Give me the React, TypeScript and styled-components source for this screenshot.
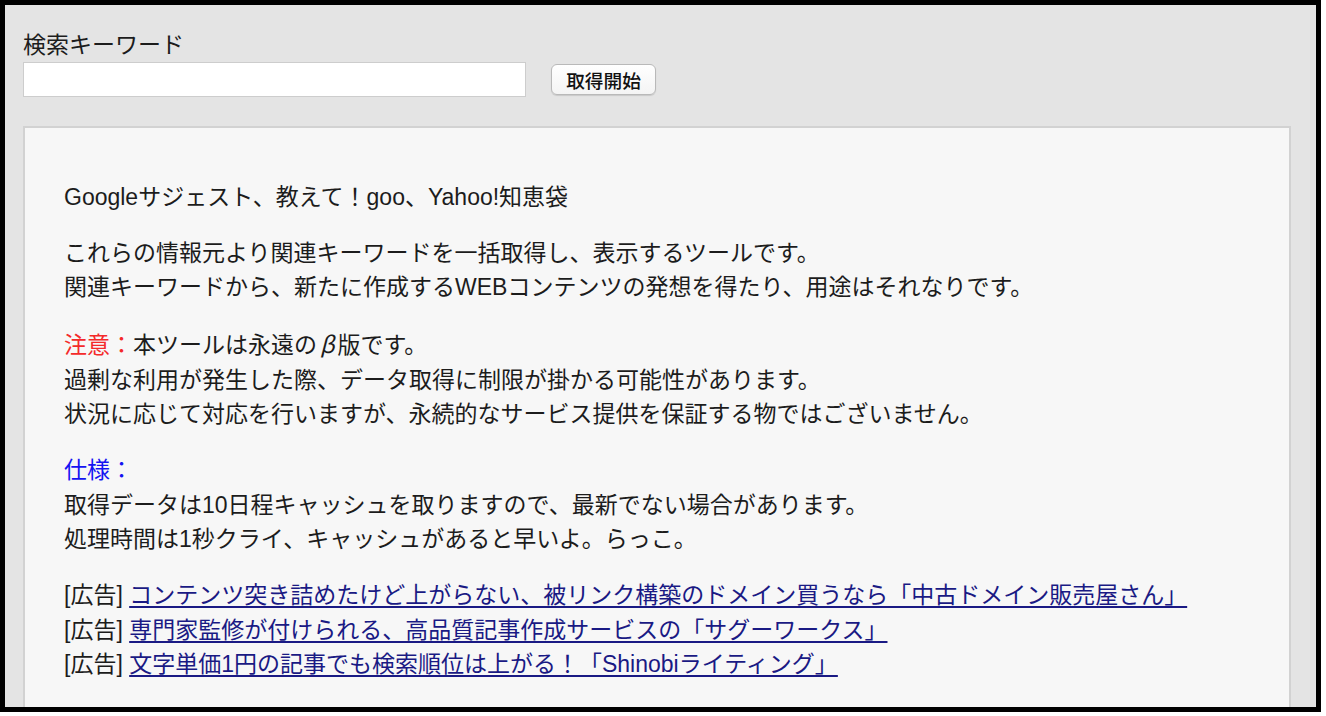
import React from "react";
import styled, { createGlobalStyle } from "styled-components";

const Global = createGlobalStyle`
  html, body { margin: 0; padding: 0; background: #ffffff; }
  body {
    font-family: "Liberation Sans", "Noto Sans CJK JP", sans-serif;
    color: #1c1c1c;
  }
`;

const Frame = styled.div`
  box-sizing: border-box;
  width: 1321px;
  height: 712px;
  border: 5px solid #000;
  background: #e4e4e4;
  padding: 23px 25px 0 18px;
  overflow: hidden;
`;

const Label = styled.div`
  font-size: 23px;
  line-height: 34px;
`;

const SearchRow = styled.form`
  display: flex;
  align-items: center;
  gap: 25px;
`;

const KeywordInput = styled.input`
  box-sizing: border-box;
  width: 503px;
  height: 35px;
  border: 1px solid #cdcdcd;
  background: #fff;
  margin: 0;
  padding: 0 6px;
  font-size: 20px;
  font-family: inherit;
`;

const StartButton = styled.button`
  box-sizing: border-box;
  width: 105px;
  height: 31px;
  border: 1px solid #b9b9b9;
  border-radius: 6px;
  background: linear-gradient(#ffffff, #f4f4f4);
  box-shadow: 0 1px 1px rgba(0, 0, 0, 0.12);
  font-family: "Liberation Sans", "Noto Sans CJK JP", sans-serif;
  font-size: 18.7px;
  font-weight: 500;
  color: #111;
  padding: 0;
  margin: 0;
`;

const Panel = styled.section`
  margin-top: 29px;
  border: 2px solid #d2d2d2;
  background: #f7f7f7;
  padding: 30px 39px;
`;

const Para = styled.p`
  margin: 21.5px 0;
  font-size: 23px;
  line-height: 34.5px;
`;

const Tag = styled.span<{ $tone: "red" | "blue" }>`
  color: ${(p) => (p.$tone === "red" ? "#f42a2a" : "#1414f2")};
`;

const Greek = styled.span`
  font-family: "Noto Sans CJK JP", sans-serif;
  font-style: italic;
  padding: 0 3px;
`;

const AdLink = styled.a`
  color: #1a1a84;
  text-decoration: underline;
  text-underline-offset: 3px;
`;

const ads = [
  "コンテンツ突き詰めたけど上がらない、被リンク構築のドメイン買うなら「中古ドメイン販売屋さん」",
  "専門家監修が付けられる、高品質記事作成サービスの「サグーワークス」",
  "文字単価1円の記事でも検索順位は上がる！「Shinobiライティング」",
];

export default function App() {
  return (
    <>
      <Global />
      <Frame>
        <Label>検索キーワード</Label>
        <SearchRow onSubmit={(e) => e.preventDefault()}>
          <KeywordInput type="text" />
          <StartButton type="submit">取得開始</StartButton>
        </SearchRow>
        <Panel>
          <Para>Googleサジェスト、教えて！goo、Yahoo!知恵袋</Para>
          <Para>
            これらの情報元より関連キーワードを一括取得し、表示するツールです。
            <br />
            関連キーワードから、新たに作成するWEBコンテンツの発想を得たり、用途はそれなりです。
          </Para>
          <Para>
            <Tag $tone="red">注意：</Tag>本ツールは永遠の<Greek>β</Greek>版です。
            <br />
            過剰な利用が発生した際、データ取得に制限が掛かる可能性があります。
            <br />
            状況に応じて対応を行いますが、永続的なサービス提供を保証する物ではございません。
          </Para>
          <Para>
            <Tag $tone="blue">仕様：</Tag>
            <br />
            取得データは10日程キャッシュを取りますので、最新でない場合があります。
            <br />
            処理時間は1秒クライ、キャッシュがあると早いよ。らっこ。
          </Para>
          <Para>
            {ads.map((t, i) => (
              <React.Fragment key={i}>
                [広告] <AdLink href="#">{t}</AdLink>
                {i < ads.length - 1 && <br />}
              </React.Fragment>
            ))}
          </Para>
        </Panel>
      </Frame>
    </>
  );
}
